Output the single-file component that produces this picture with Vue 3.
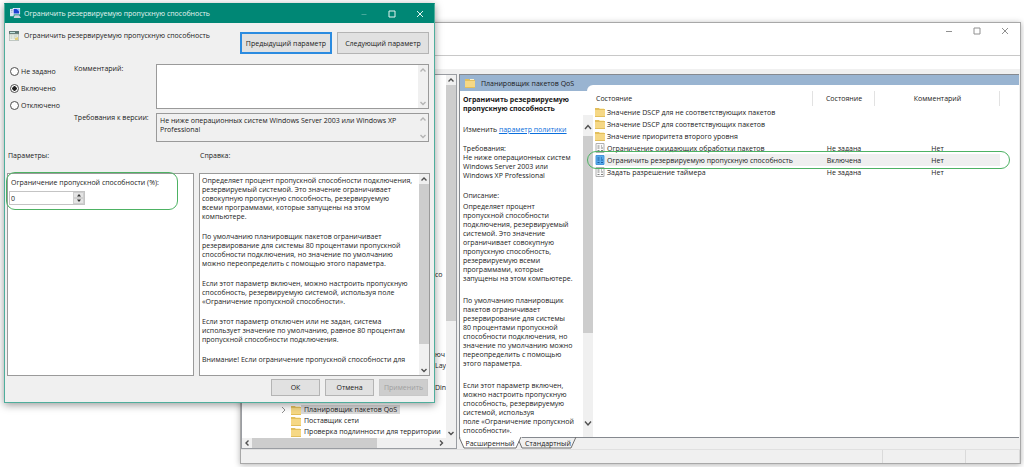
<script setup>
import { ref } from 'vue'

const state = ref('on')
const states = [
  { id: 'none', label: 'Не задано' },
  { id: 'on', label: 'Включено' },
  { id: 'off', label: 'Отключено' },
]
const comment = ref('')
const support = ref('Не ниже операционных систем Windows Server 2003 или Windows XP\nProfessional')
const limit = ref('0')

const help = [
  'Определяет процент пропускной способности подключения,\nрезервируемый системой. Это значение ограничивает\nсовокупную пропускную способность, резервируемую\nвсеми программами, которые запущены на этом\nкомпьютере.',
  'По умолчанию планировщик пакетов ограничивает\nрезервирование для системы 80 процентами пропускной\nспособности подключения, но значение по умолчанию\nможно переопределить с помощью этого параметра.',
  'Если этот параметр включен, можно настроить пропускную\nспособность, резервируемую системой, используя поле\n«Ограничение пропускной способности».',
  'Если этот параметр отключен или не задан, система\nиспользует значение по умолчанию, равное 80 процентам\nпропускной способности подключения.',
  'Внимание! Если ограничение пропускной способности для',
]

const about = [
  'Определяет процент\nпропускной способности\nподключения, резервируемый\nсистемой. Это значение\nограничивает совокупную\nпропускную способность,\nрезервируемую всеми\nпрограммами, которые\nзапущены на этом компьютере.',
  'По умолчанию планировщик\nпакетов ограничивает\nрезервирование для системы\n80 процентами пропускной\nспособности подключения, но\nзначение по умолчанию можно\nпереопределить с помощью\nэтого параметра.',
  'Если этот параметр включен,\nможно настроить пропускную\nспособность, резервируемую\nсистемой, используя\nполе «Ограничение пропускной\nспособности».',
]

const rows = [
  { name: 'Значение DSCP для не соответствующих пакетов', folder: true },
  { name: 'Значение DSCP для соответствующих пакетов', folder: true },
  { name: 'Значение приоритета второго уровня', folder: true },
  { name: 'Ограничение ожидающих обработки пакетов', state: 'Не задана', note: 'Нет' },
  { name: 'Ограничить резервируемую пропускную способность', state: 'Включена', note: 'Нет', selected: true },
  { name: 'Задать разрешение таймера', state: 'Не задана', note: 'Нет' },
]

const tree = [
  { tail: 'юч' },
  { tail: 'Lay' },
  {},
  { tail: 'Din' },
  {},
  { name: 'Планировщик пакетов QoS', open: true },
  { name: 'Поставщик сети' },
  { name: 'Проверка подлинности для территории' },
]
</script>

<template>
  <div class="desktop">
    <section class="win console">
      <header class="console-title">
        <button class="cap" aria-label="Свернуть"><svg viewBox="0 0 8 8"><path d="M1 4.5h6" /></svg></button>
        <button class="cap" aria-label="Развернуть"><svg viewBox="0 0 8 8"><path d="M1 1h6v6H1z" /></svg></button>
        <button class="cap" aria-label="Закрыть"><svg viewBox="0 0 8 8"><path d="M1 1l6 6M7 1L1 7" /></svg></button>
      </header>
      <div class="toolbar"></div>
      <div class="panes">
        <div class="tree">
          <div class="tree-main">
            <div class="tree-list">
              <div class="tree-row upper"><span class="tail">со</span></div>
              <div v-for="(t, i) in tree" :key="i" class="tree-row">
                <template v-if="t.name">
                  <span class="twist"><svg v-if="t.open" viewBox="0 0 5 8"><path d="M1 1l3 3-3 3" /></svg></span>
                  <svg class="folder" viewBox="0 0 10 10"><path class="f1" d="M0 1h4l1 1h5v8H0z" /><path class="f2" d="M0 3h10v6H0z" /><path class="f3" d="M5 1h4v1H5z" /></svg>
                  <span class="tree-name" :class="{ open: t.open }">{{ t.name }}</span>
                </template>
                <span v-else-if="t.tail" class="tail">{{ t.tail }}</span>
              </div>
            </div>
            <div class="sb">
              <svg class="ar" viewBox="0 0 8 8"><path d="M1.5 5.5L4 3l2.5 2.5" /></svg>
              <div class="thumb tree-thumb"></div>
              <svg class="ar end" viewBox="0 0 8 8"><path d="M1.5 3L4 5.5 6.5 3" /></svg>
            </div>
          </div>
          <div class="hsb">
            <svg class="ar" viewBox="0 0 8 8"><path d="M5.5 1.5L3 4l2.5 2.5" /></svg>
            <div class="hthumb"></div>
            <svg class="ar end" viewBox="0 0 8 8"><path d="M3 1.5L5.5 4 3 6.5" /></svg>
          </div>
        </div>

        <div class="result">
          <div class="result-main">
            <div class="info">
              <div class="info-head">
                <svg class="folder" viewBox="0 0 10 10"><path class="f1" d="M0 1h4l1 1h5v8H0z" /><path class="f2" d="M0 3h10v6H0z" /><path class="f3" d="M5 1h4v1H5z" /></svg>
                <span>Планировщик пакетов QoS</span>
              </div>
              <div class="info-body">
                <div class="info-text">
                  <h2>Ограничить резервируемую<br>пропускную способность</h2>
                  <p class="edit">Изменить <a href="#">параметр политики</a></p>
                  <p class="req">Требования:<br>Не ниже операционных систем<br>Windows Server 2003 или<br>Windows XP Professional</p>
                  <p class="cap-line">Описание:</p>
                  <p v-for="(p, i) in about" :key="i" class="about">{{ p }}</p>
                </div>
                <div class="sb info-sb">
                  <svg class="ar big" viewBox="0 0 8 8"><path d="M1 6l3-3.5L7 6" /></svg>
                  <div class="thumb info-thumb"></div>
                  <svg class="ar big end" viewBox="0 0 8 8"><path d="M1 2.5L4 6l3-3.5" /></svg>
                </div>
              </div>
            </div>
            <div class="list">
              <table>
                <colgroup><col><col class="c-state"><col class="c-note"><col class="c-end"></colgroup>
                <thead>
                  <tr><th class="first">Состояние</th><th>Состояние</th><th>Комментарий</th><th class="last"></th></tr>
                </thead>
                <tbody>
                  <tr v-for="r in rows" :key="r.name" :class="{ selected: r.selected }">
                    <td class="name">
                      <div class="cell">
                        <svg v-if="r.folder" class="folder" viewBox="0 0 10 10"><path class="f1" d="M0 1h4l1 1h5v8H0z" /><path class="f2" d="M0 3h10v6H0z" /><path class="f3" d="M5 1h4v1H5z" /></svg>
                        <svg v-else class="setting" viewBox="0 0 10 10"><path class="s1" d="M1 0.5h8v9H1z" /><path class="s2" d="M2.5 3h2M2.5 5h2M2.5 7.5h2M6 3h1M6 5h2M6 7.5h2" /></svg>
                        <span>{{ r.name }}</span>
                      </div>
                    </td>
                    <td>{{ r.state }}</td>
                    <td>{{ r.note }}</td>
                    <td class="end-cell"></td>
                  </tr>
                </tbody>
              </table>
            </div>
            <div class="mark mark-row"></div>
          </div>
          <div class="tabs">
            <svg class="tab-lines" viewBox="0 0 122 12"><path class="fill" d="M1 0l5 11h52l5-11z" /><path d="M0 0l5 11h52l5-11M60 4l3 7h49l5-11" /></svg>
            <button class="tab t1">Расширенный</button>
            <button class="tab t2">Стандартный</button>
          </div>
        </div>
      </div>
      <footer class="status"><span></span><span class="st2"></span><span class="st3"></span></footer>
    </section>

    <section class="win dialog">
      <header class="dlg-title">
        <svg class="app" viewBox="0 0 12 12"><path fill="#dce6f2" d="M0 1h4v8H0z" /><path fill="#8aa0c0" d="M1 2h2v1H1zM1 4h2v1H1z" /><path fill="#e8eefc" d="M3 0h8v7H3z" /><path fill="#1c3fd0" d="M4 1h6v5H4z" /><path fill="#7fb0ff" d="M7 1h3v3z" /><path fill="#c9d2dc" d="M5 8h5l2 3H4z" /></svg>
        <h1>Ограничить резервируемую пропускную способность</h1>
        <button class="cap dim" aria-label="Свернуть"><svg viewBox="0 0 8 8"><path d="M1.5 4.5h5" /></svg></button>
        <button class="cap" aria-label="Развернуть"><svg viewBox="0 0 8 8"><path d="M1 1h6v6H1z" /></svg></button>
        <button class="cap" aria-label="Закрыть"><svg viewBox="0 0 8 8"><path d="M1 1l6 6M7 1L1 7" /></svg></button>
      </header>

      <div class="dlg-head">
        <svg class="policy" viewBox="0 0 10 10"><path fill="#5d7774" d="M0 0h10v3H0z" /><path fill="#bfe0dc" d="M1 1h5v1H1z" /><path fill="#eef3ea" stroke="#8b9a96" stroke-width=".6" d="M.3 3h9.4v6.7H.3z" /><path stroke="#a8b8b0" stroke-width=".8" d="M1.5 5h2M4.5 5h4M1.5 7h2M4.5 7h2" /><path fill="#e3cf7a" d="M6 7l3-1v3H6z" /></svg>
        <span class="grow">Ограничить резервируемую пропускную способность</span>
        <button class="btn nav focus">Предыдущий параметр</button>
        <button class="btn nav">Следующий параметр</button>
      </div>

      <div class="dlg-form">
        <div class="radios">
          <label v-for="s in states" :key="s.id"><input v-model="state" type="radio" name="state" :value="s.id">{{ s.label }}</label>
        </div>
        <label class="lbl" for="comment">Комментарий:</label>
        <div class="box comment">
          <textarea id="comment" v-model="comment"></textarea>
          <div class="sb idle">
            <svg class="ar" viewBox="0 0 8 8"><path d="M1.5 5.5L4 3l2.5 2.5" /></svg>
            <svg class="ar end" viewBox="0 0 8 8"><path d="M1.5 3L4 5.5 6.5 3" /></svg>
          </div>
        </div>
        <label class="lbl" for="support">Требования к версии:</label>
        <div class="box support">
          <textarea id="support" v-model="support" readonly></textarea>
          <div class="sb idle">
            <svg class="ar" viewBox="0 0 8 8"><path d="M1.5 5.5L4 3l2.5 2.5" /></svg>
            <svg class="ar end" viewBox="0 0 8 8"><path d="M1.5 3L4 5.5 6.5 3" /></svg>
          </div>
        </div>
      </div>

      <div class="dlg-labels"><span>Параметры:</span><span>Справка:</span></div>

      <div class="dlg-panels">
        <div class="box params">
          <label for="limit">Ограничение пропускной способности (%):</label>
          <div class="spin">
            <input id="limit" v-model="limit" type="text">
            <div class="spin-btns">
              <button aria-label="Больше"><svg viewBox="0 0 6 4"><path d="M1 3.5L3 1l2 2.5z" /></svg></button>
              <button aria-label="Меньше"><svg viewBox="0 0 6 4"><path d="M1 .5L3 3 5 .5z" /></svg></button>
            </div>
          </div>
          <div class="mark mark-param"></div>
        </div>
        <div class="box help">
          <div class="help-text"><p v-for="(p, i) in help" :key="i">{{ p }}</p></div>
          <div class="sb">
            <svg class="ar" viewBox="0 0 8 8"><path d="M1.5 5.5L4 3l2.5 2.5" /></svg>
            <div class="thumb help-thumb"></div>
            <svg class="ar end" viewBox="0 0 8 8"><path d="M1.5 3L4 5.5 6.5 3" /></svg>
          </div>
        </div>
      </div>

      <footer class="dlg-foot">
        <button class="btn">ОК</button>
        <button class="btn">Отмена</button>
        <button class="btn" disabled>Применить</button>
      </footer>
    </section>
  </div>
</template>

<style>
body {
  margin: 0;
  background: #fff;
}
</style>

<style scoped>
.desktop {
  position: relative;
  height: 100vh;
  min-height: 467px;
  overflow: hidden;
  background: #fff;
  color: #1a1a1a;
  font-family: "Open Sans", "Noto Sans", sans-serif;
  font-size: 7px;
  line-height: 9px;
}
.desktop *,
.desktop *::before {
  box-sizing: border-box;
}
h1, h2, p {
  margin: 0;
  font-size: 7px;
  font-weight: 400;
}
button, input, textarea {
  margin: 0;
  padding: 0;
  border: 0;
  background: none;
  color: inherit;
  font: inherit;
}
svg {
  display: block;
  flex: none;
  fill: none;
}
.win {
  position: absolute;
  display: flex;
  flex-direction: column;
}

/* scroll bars */
.sb {
  display: flex;
  flex-direction: column;
  flex: none;
  width: 10px;
  background: #f0f0f0;
}
.ar {
  width: 8px;
  height: 8px;
  margin: 1px;
  stroke: #505050;
  stroke-width: 1.4;
}
.ar.end {
  margin-top: auto;
}
.idle .ar {
  stroke: #b4b4b4;
}
.thumb {
  background: #cdcdcd;
}
.cap {
  width: 28px;
  display: flex;
  align-items: center;
  justify-content: center;
}
.cap svg {
  width: 8px;
  height: 8px;
  stroke: currentColor;
}
.folder {
  width: 10px;
  height: 10px;
}
.f1 { fill: #e3bf5c; }
.f2 { fill: #f6d885; }
.f3 { fill: #fff3c8; }
.setting {
  width: 10px;
  height: 10px;
}
.s1 { fill: #fafafa; stroke: #b0b0b0; }
.s2 { stroke: #808080; }
.selected .s1 { fill: #5aa9ea; stroke: #4596dc; }
.selected .s2 { stroke: #1d5f9f; }
.mark {
  position: absolute;
  border: 1px solid #4db263;
  border-radius: 9px;
  pointer-events: none;
}

/* console window */
.console {
  top: 22px;
  left: 240px;
  right: 3px;
  bottom: 3px;
  border: 1px solid #a8a8a8;
  background: #f0f0f0;
  box-shadow: 0 1px 6px rgba(0, 0, 0, .3);
}
.console-title {
  display: flex;
  justify-content: flex-end;
  height: 33px;
  padding: 0 1px 16px 0;
  border-bottom: 1px solid #c8c8c8;
  background: #fff;
  color: #909090;
}
.toolbar {
  height: 13px;
  background: #fff;
}
.panes {
  flex: 1;
  min-height: 0;
  display: flex;
  gap: 2px;
  padding: 5px 1px 0 0;
}
.tree {
  flex: none;
  display: flex;
  flex-direction: column;
  width: 216px;
  border: 1px solid #9a9da2;
  background: #fff;
}
.tree-main {
  flex: 1;
  display: flex;
  min-height: 0;
}
.tree-list {
  flex: 1;
  min-width: 0;
  display: flex;
  flex-direction: column;
  justify-content: flex-end;
  padding-bottom: 1px;
}
.tree-row {
  display: flex;
  align-items: center;
  height: 11px;
  white-space: nowrap;
}
.upper {
  margin-bottom: 69px;
}
.tail {
  margin-left: 193px;
}
.twist {
  flex: none;
  width: 10px;
  margin-left: 39px;
}
.twist svg {
  width: 5px;
  height: 8px;
  stroke: #909090;
}
.tree-name {
  padding: 0 3px;
}
.tree-name.open {
  background: #d9d9d9;
}
.tree-thumb {
  height: 236px;
}
.hsb {
  display: flex;
  height: 10px;
  background: #f0f0f0;
}
.hsb .ar.end {
  margin: 1px 11px 1px auto;
}
.hthumb {
  width: 125px;
  background: #cdcdcd;
}
.result {
  flex: 1;
  min-width: 0;
  display: flex;
  flex-direction: column;
}
.result-main {
  position: relative;
  flex: 1;
  min-height: 0;
  display: flex;
  border: 1px solid #85898f;
  border-right: 0;
  background: #99b4d1;
}
.info {
  position: relative;
  z-index: 1;
  flex: none;
  display: flex;
  flex-direction: column;
  width: 133px;
}
.info-head {
  display: flex;
  align-items: center;
  gap: 6px;
  height: 16px;
  padding-left: 5px;
  white-space: nowrap;
}
.info-body {
  flex: 1;
  display: flex;
  min-height: 0;
  background: #fff;
}
.info-text {
  flex: 1;
  min-width: 0;
  padding: 4px 0 0 3px;
  white-space: nowrap;
}
h2 {
  font-weight: 700;
}
.edit {
  margin-top: 12px;
}
a {
  color: #0b6fdc;
}
.req {
  margin-top: 10px;
}
.cap-line {
  margin-top: 11px;
}
.about {
  margin-bottom: 13px;
  white-space: pre;
}
.cap-line + .about {
  margin-top: 2px;
}
.info-sb {
  margin-top: 24px;
}
.ar.big {
  margin-top: 8px;
  margin-bottom: 5px;
}
.ar.big.end {
  margin-top: auto;
  margin-bottom: 10px;
}
.info-thumb {
  height: 197px;
}
.list {
  flex: 1;
  min-width: 0;
  margin: 10px 0 0 -6px;
  border-radius: 6px 0 0 0;
  background: #fff;
}
table {
  width: 100%;
  table-layout: fixed;
  border-collapse: collapse;
}
.c-state { width: 62px; }
.c-note { width: 125px; }
.c-end { width: 19px; }
th, td {
  padding: 0;
  font-weight: 400;
  text-align: center;
  white-space: nowrap;
}
th {
  height: 21px;
  padding-top: 5px;
  background: linear-gradient(#e2e2e2, #e2e2e2) no-repeat right 6px / 1px 15px;
}
th.last {
  background: none;
}
th.first {
  padding-left: 9px;
  text-align: left;
}
td {
  height: 12px;
}
.cell {
  display: flex;
  align-items: center;
  gap: 2px;
  height: 12px;
  padding-left: 8px;
}
.selected td {
  background: #efefef;
}
.selected .name {
  background: linear-gradient(90deg, #fff 18px, #efefef 18px);
}
.selected .end-cell {
  background: #fff;
}
.mark-row {
  z-index: 2;
  top: 76px;
  left: 127px;
  right: 9px;
  height: 18px;
}
.tabs {
  position: relative;
  display: flex;
  height: 11px;
}
.tab-lines {
  position: absolute;
  left: 0;
  top: -1px;
  width: 122px;
  height: 12px;
  stroke: #707070;
}
.fill {
  fill: #fff;
  stroke: none;
}
.tab {
  position: relative;
  height: 10px;
  white-space: nowrap;
}
.t1 {
  width: 50px;
  margin-left: 6px;
}
.t2 {
  width: 48px;
  margin-left: 9px;
}
.status {
  flex: none;
  display: flex;
  height: 14px;
  border-top: 1px solid #e0e0e0;
}
.status span {
  flex: 1;
  border-right: 1px solid #dadada;
}
.status .st2 {
  flex: none;
  width: 83px;
}
.status .st3 {
  flex: none;
  width: 54px;
}

/* policy dialog */
.dialog {
  top: 3px;
  left: 4px;
  width: 431px;
  border: 1px solid #4fae9c;
  border-top-color: #008775;
  background: #f0f0f0;
  box-shadow: 0 2px 8px rgba(0, 0, 0, .4);
}
.dlg-title {
  display: flex;
  align-items: center;
  height: 19px;
  padding-left: 5px;
  background: #008775;
  color: #e6f5f2;
}
.dlg-title h1 {
  flex: 1;
  margin-left: 3px;
}
.app {
  width: 11px;
  height: 11px;
}
.dim {
  opacity: .3;
}
.dlg-head {
  display: flex;
  gap: 5px;
  height: 41px;
  padding: 8px 5px 0 4px;
}
.policy {
  width: 10px;
  height: 10px;
}
.grow {
  flex: 1;
  white-space: nowrap;
}
.btn {
  display: flex;
  align-items: center;
  justify-content: center;
  width: 49px;
  height: 17px;
  border: 1px solid #b4b4b4;
  background: #e1e1e1;
  white-space: nowrap;
}
.btn:disabled {
  border-color: #c8c8c8;
  background: #cdcdcd;
  color: #a0a0a0;
}
.nav {
  width: 92px;
  height: 22px;
  margin-top: 1px;
}
.nav.focus {
  border: 2px solid #2b8be0;
}
.dlg-form {
  display: grid;
  grid-template-columns: 64px 82px 1fr;
  grid-template-rows: 45px 29px;
  row-gap: 4px;
  padding: 0 5px;
}
.radios {
  grid-row: 1 / 3;
  display: flex;
  flex-direction: column;
  gap: 8px;
  padding-top: 3px;
}
.radios label {
  display: flex;
  align-items: center;
  gap: 2px;
  height: 9px;
}
.radios input {
  appearance: none;
  flex: none;
  width: 9px;
  height: 9px;
  border: 1px solid #505050;
  border-radius: 50%;
  background: #fff;
}
.radios input:checked {
  background: radial-gradient(#202020 40%, #fff 50%);
}
.lbl {
  white-space: nowrap;
}
.box {
  display: flex;
  border: 1px solid #9a9a9a;
  background: #fff;
}
textarea {
  flex: 1;
  min-width: 0;
  padding: 2px 3px;
  resize: none;
  overflow: hidden;
  white-space: pre;
  outline: 0;
}
.support {
  background: #f0f0f0;
}
.dlg-labels {
  display: grid;
  grid-template-columns: 192px 1fr;
  height: 31px;
  padding: 9px 3px 0;
}
.dlg-panels {
  display: grid;
  grid-template-columns: 187px 1fr;
  gap: 5px;
  height: 197px;
  padding: 0 4px 0 2px;
}
.params {
  position: relative;
  flex-direction: column;
  padding: 4px 1px;
}
.params label {
  padding-left: 2px;
  white-space: nowrap;
}
.spin {
  display: flex;
  width: 76px;
  height: 14px;
  margin-top: 4px;
  border: 1px solid #c4c4c4;
}
.spin input {
  flex: 1;
  min-width: 0;
  padding-left: 1px;
  outline: 0;
}
.spin-btns {
  display: grid;
  width: 11px;
  background: #e4e4e4;
}
.spin-btns button {
  display: flex;
  align-items: center;
  justify-content: center;
  border: 1px solid #cfcfcf;
}
.spin-btns svg {
  width: 6px;
  height: 4px;
  fill: #303030;
}
.mark-param {
  top: -2px;
  left: -2px;
  width: 172px;
  height: 38px;
}
.help {
  min-width: 0;
}
.help-text {
  flex: 1;
  min-width: 0;
  padding: 2px 0 0 2px;
  white-space: pre;
}
.help-text p {
  margin-bottom: 11px;
}
.help-thumb {
  height: 160px;
}
.dlg-foot {
  display: flex;
  justify-content: flex-end;
  gap: 5px;
  padding: 9px 6px 6px;
}
</style>
